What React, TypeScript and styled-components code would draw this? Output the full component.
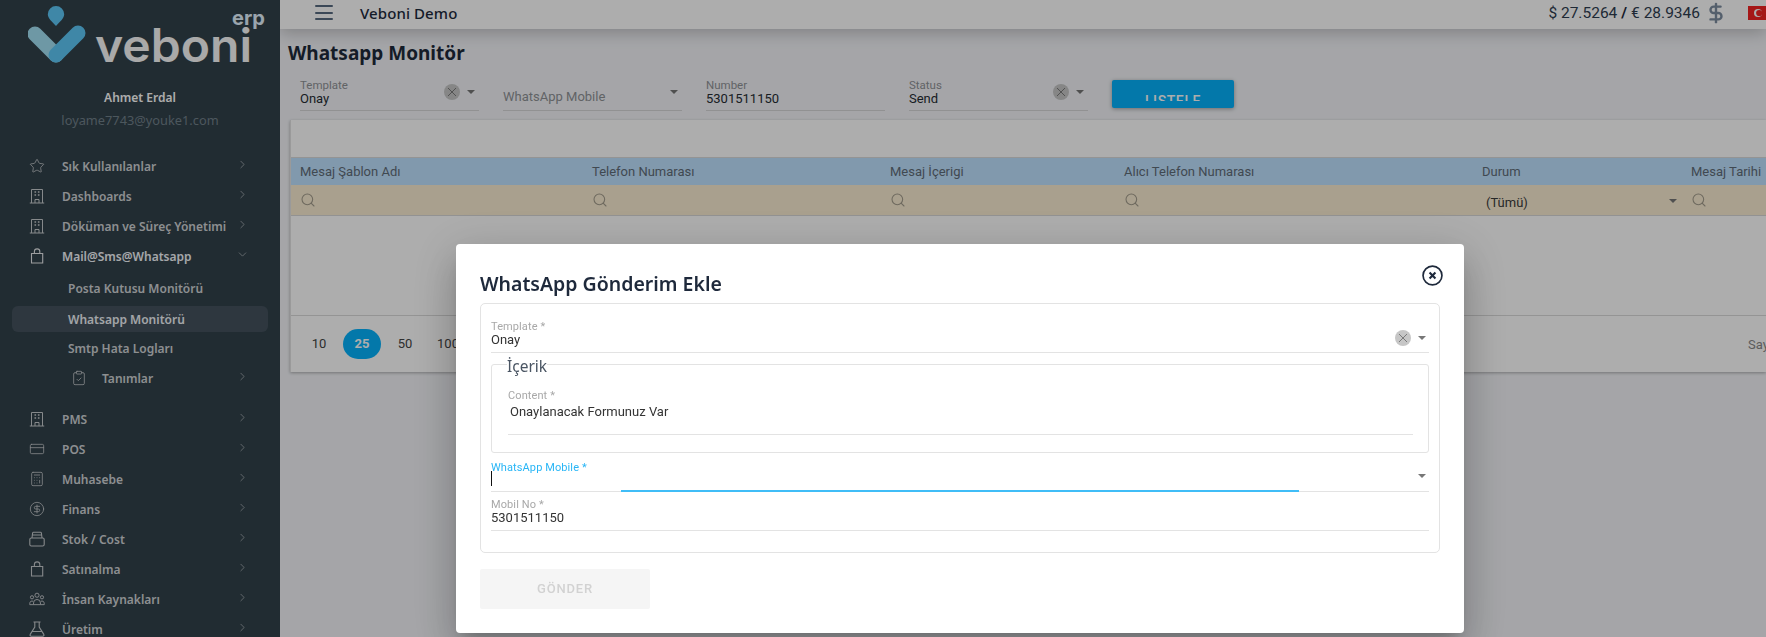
import React from "react";
import styled, { createGlobalStyle } from "styled-components";
import { Star, CreditCard, Calculator, CircleDollarSign, ChevronRight, ChevronDown, Search, DollarSign, ClipboardCheck } from "lucide-react";

const GlobalStyle = createGlobalStyle`
  html, body {
    margin: 0;
    height: 100%;
    overflow: hidden;
    background: #f3f4f8;
    font-family: "Roboto", "Liberation Sans", sans-serif;
  }
  * { box-sizing: border-box; }
`;

const Page = styled.div`
  display: flex;
  width: 100vw;
  height: 100vh;
  overflow: hidden;
`;

const Sidebar = styled.aside`
  flex: 0 0 280px;
  background: #32424b;
  font-family: "Noto Sans", sans-serif;
  overflow: hidden;
`;

const LogoWrap = styled.div`
  height: 86px;
  padding-left: 28px;
  display: flex;
`;

const LogoText = styled.svg`
  display: block;
`;

const UserBlock = styled.div`
  height: 65px;
  text-align: center;
  padding-top: 2px;
`;

const UserName = styled.div`
  font-size: 12px;
  line-height: 20px;
  font-weight: 600;
  color: #fff;
`;

const UserMail = styled.div`
  font-size: 12.800px;
  line-height: 20px;
  margin-top: 2px;
  color: #71808a;
`;

const MenuRow = styled.div<{ $open?: boolean }>`
  height: 30px;
  display: flex;
  align-items: center;
  padding-left: 29px;
  font-size: 12px;
  font-weight: 600;
  color: ${(p) => (p.$open ? "#f4f7fb" : "#d0d3d6")};
  svg.icon { flex: 0 0 16px; color: ${(p) => (p.$open ? "#e6e8ea" : "#c6cacd")}; }
`;

const MenuLabel = styled.span`
  width: 170px;
  margin-left: 17px;
  white-space: nowrap;
`;

const Chevron = styled.span`
  display: flex;
  color: #b4babf;
  margin-top: -3px;
  margin-left: 4px;
`;

const SubGroup = styled.div`
  padding-top: 2px;
  padding-bottom: 11px;
`;

const SubRow = styled.div<{ $active?: boolean }>`
  height: ${(p) => (p.$active ? "26px" : "30px")};
  margin: ${(p) => (p.$active ? "3px 12px 1px" : "0 12px")};
  padding-left: 56px;
  display: flex;
  align-items: center;
  border-radius: 6px;
  font-size: 12px;
  font-weight: 600;
  color: ${(p) => (p.$active ? "#f1f4f8" : "#d0d3d6")};
  background: ${(p) => (p.$active ? "#44525d" : "transparent")};
`;

const NestedRow = styled.div`
  height: 30px;
  padding-left: 71px;
  display: flex;
  align-items: center;
  font-size: 12px;
  font-weight: 600;
  color: #d0d3d6;
  svg.icon { color: #c6cacd; }
`;

const NestedLabel = styled.span`
  width: 130px;
  margin-left: 15px;
`;

const Main = styled.main`
  flex: 1;
  min-width: 0;
  display: flex;
  flex-direction: column;
  overflow: hidden;
`;

const TopBar = styled.header`
  flex: 0 0 29px;
  height: 29px;
  background: #fff;
  display: flex;
  align-items: center;
  padding: 0 0 4px 35px;
  box-shadow: 0 4px 16px rgba(0, 0, 0, 0.22);
  position: relative;
  color: #2b3a4d;
`;

const Burger = styled.div`
  width: 18px;
  height: 15px;
  display: flex;
  flex-direction: column;
  justify-content: space-between;
  margin-right: 27px;
  span { display: block; height: 2px; background: #586a80; border-radius: 1px; }
`;

const CompanyName = styled.div`
  font-family: "Noto Sans", sans-serif;
  font-size: 15px;
  letter-spacing: 0.1px;
  font-weight: 500;
  color: #1d2a3c;
`;

const Rates = styled.div`
  margin-left: auto;
  display: flex;
  align-items: center;
  font-size: 15.500px;
  color: #2f3d50;
  b { margin: 0 4px; font-weight: 700; color: #1d2a3c; }
`;

const RateIcon = styled.span`
  display: flex;
  margin-left: 5px;
  color: #7d8da0;
`;

const Flag = styled.span`
  width: 24px;
  height: 14px;
  margin-left: 21px;
  margin-right: -6px;
  background: #f42323;
  display: flex;
  align-items: center;
  padding-left: 5px;
`;

const PageTitle = styled.h1`
  margin: 11px 0 0 8px;
  font-family: "Noto Sans", sans-serif;
  font-size: 19px;
  line-height: 26px;
  font-weight: 700;
  color: #1e2a3a;
`;

const Filters = styled.div`
  display: flex;
  gap: 24px;
  padding-left: 20px;
  height: 41px;
  margin-top: 14px;
`;

const FilterField = styled.div`
  width: 179px;
  height: 31px;
  border-bottom: 1px solid #d6d6d8;
  position: relative;
`;

const FilterLabel = styled.div`
  font-size: 11.500px;
  line-height: 11px;
  color: #8f9296;
`;

const FilterValue = styled.div`
  font-size: 13px;
  line-height: 15px;
  color: #262c33;
`;

const Placeholder = styled.div`
  font-size: 13px;
  line-height: 34px;
  height: 30px;
  color: #8f9296;
`;

const FieldIcons = styled.div`
  position: absolute;
  right: 4px;
  top: 2px;
  height: 20px;
  display: flex;
  align-items: center;
  gap: 5px;
`;

const ClearDot = styled.span`
  width: 16px;
  height: 16px;
  border-radius: 50%;
  background: #c6c6c6;
  display: flex;
  align-items: center;
  justify-content: center;
`;

const Caret = styled.span`
  width: 0;
  height: 0;
  border-left: 4px solid transparent;
  border-right: 4px solid transparent;
  border-top: 4px solid #777;
  margin-left: 2px;
`;

const ListButton = styled.div`
  width: 122px;
  height: 28px;
  border-radius: 2px;
  background: #05b2fb;
  box-shadow: 0 1px 4px rgba(0, 0, 0, 0.35);
  padding-top: 14px;
  text-align: center;
  overflow: hidden;
`;

const ListButtonText = styled.span`
  display: block;
  height: 7px;
  overflow: hidden;
  font-size: 14px;
  line-height: 14px;
  font-weight: 500;
  letter-spacing: 0.6px;
  color: #fff;
`;

const Card = styled.section`
  margin-left: 10px;
  margin-top: -1px;
  height: 252px;
  background: #fff;
  overflow: hidden;
  box-shadow: 0 1px 3px rgba(0, 0, 0, 0.3);
  border-left: 1px solid #e4e4e4;
`;

const CardToolbar = styled.div`
  height: 38px;
  border-bottom: 1px solid #dadada;
`;

const TableRow = styled.div<{ $kind: "head" | "filter" }>`
  display: grid;
  grid-template-columns: 292px 298px 234px 358px 209px 1fr;
  height: ${(p) => (p.$kind === "head" ? "27px" : "31px")};
  align-items: center;
  background: ${(p) => (p.$kind === "head" ? "#bfe2ff" : "#f9ecd2")};
  border-bottom: ${(p) => (p.$kind === "filter" ? "1px solid #d8d8d8" : "none")};
  color: #5f6c78;
  font-size: 13px;
`;

const Cell = styled.div`
  padding-left: 9px;
  position: relative;
  display: flex;
  align-items: center;
  white-space: nowrap;
`;

const SearchIcon = styled(Search)`
  color: #a39c8c;
`;

const DurumValue = styled.span`
  color: #3a3a3a;
  margin-left: 4px;
  margin-top: 5px;
`;

const DurumCaret = styled(Caret)`
  position: absolute;
  right: 5px;
  top: 9px;
`;

const CardBody = styled.div`
  height: 100px;
  border-bottom: 1px solid #dadada;
`;

const CardFooter = styled.div`
  height: 56px;
  display: grid;
  grid-template-columns: 1457px auto;
  align-items: center;
  font-size: 13px;
  color: #555;
`;

const Pager = styled.div`
  display: flex;
  align-items: center;
  padding-left: 9px;
  gap: 5px;
`;

const PageItem = styled.div<{ $active?: boolean }>`
  width: 38px;
  height: 30px;
  line-height: 30px;
  text-align: center;
  border-radius: 15px;
  font-weight: ${(p) => (p.$active ? 700 : 400)};
  color: ${(p) => (p.$active ? "#fff" : "#444")};
  background: ${(p) => (p.$active ? "#05b2fb" : "transparent")};
`;

const PageInfo = styled.div`
  color: #888;
  white-space: nowrap;
`;

const Backdrop = styled.div`
  position: fixed;
  inset: 0;
  background: rgba(0, 0, 0, 0.32);
`;

const Dialog = styled.div`
  position: fixed;
  left: 456px;
  top: 244px;
  width: 1008px;
  padding: 22px 24px 24px;
  background: #fff;
  border-radius: 4px;
  box-shadow: 0 11px 15px -7px rgba(0, 0, 0, 0.2), 0 24px 38px 3px rgba(0, 0, 0, 0.14), 0 9px 46px 8px rgba(0, 0, 0, 0.12);
`;

const DialogTitle = styled.h2`
  margin: 0 0 1px;
  font-family: "Noto Sans", sans-serif;
  font-size: 19.500px;
  line-height: 36px;
  font-weight: 600;
  color: #1e293b;
`;

const CloseButton = styled.div`
  position: absolute;
  top: 21px;
  right: 21px;
  display: flex;
  color: #1e293b;
`;

const FormBox = styled.div`
  border: 1px solid #e3e3e3;
  border-radius: 5px;
  padding: 17px 10px 21px;
`;

const Field = styled.div<{ $tight?: boolean }>`
  position: relative;
  height: ${(p) => (p.$tight ? "30px" : "32px")};
  border-bottom: 1px solid #e3e3e3;
  margin-top: ${(p) => (p.$tight ? "9px" : "0")};
  & + & { margin-top: 7px; }
`;

const FieldLabel = styled.div<{ $focus?: boolean }>`
  font-size: 11px;
  line-height: 12px;
  letter-spacing: 0.1px;
  color: ${(p) => (p.$focus ? "#29b6f6" : "#a8a8a8")};
`;

const FieldValue = styled.div`
  font-size: 13px;
  line-height: 14px;
  color: #333;
`;

const CursorBar = styled.div`
  width: 1px;
  height: 15px;
  margin-top: -3px;
  background: #111;
`;

const FocusLine = styled.div`
  position: absolute;
  left: 130px;
  width: 678px;
  bottom: -1px;
  height: 2px;
  background: #40bdf7;
`;

const ModalIcons = styled(FieldIcons)`
  right: 3px;
  top: 7px;
`;

const TightIcons = styled(ModalIcons)`
  top: 4px;
`;

const ContentSet = styled.fieldset`
  margin: -2px 0 0;
  border: 1px solid #e3e3e3;
  border-radius: 3px;
  padding: 13px 15px 0 16px;
  height: 102px;
  min-width: 0;
`;

const ContentLegend = styled.legend`
  margin-left: -1px;
  padding: 4px 0 0;
  font-family: "Noto Sans", sans-serif;
  font-size: 15.500px;
  line-height: 22px;
  color: #4a5563;
`;

const ContentField = styled.div`
  height: 45px;
  border-bottom: 1px solid #e3e3e3;
`;

const ContentValue = styled(FieldValue)`
  padding-left: 2px;
  margin-top: 1px;
  line-height: 18px;
`;

const SendButton = styled.div`
  width: 170px;
  height: 40px;
  margin-top: 16px;
  background: #f5f5f5;
  border-radius: 2px;
  text-align: center;
  line-height: 40px;
  font-size: 13px;
  font-weight: 500;
  letter-spacing: 0.8px;
  color: #d2d2d2;
`;

const ico = { className: "icon", size: 16, strokeWidth: 1.2 };

const BuildingIcon = () => (
  <svg className="icon" width="16" height="16" viewBox="0 0 16 16" fill="none" stroke="currentColor" strokeWidth="1">
    <path d="M2.5 15V1.5h11V15M0.8 15h14.4M6 15v-3.5h4V15" />
    <path d="M5.5 4h1.6M8.9 4h1.6M5.5 7h1.6M8.9 7h1.6" strokeWidth="1.3" />
  </svg>
);

const BagIcon = () => (
  <svg className="icon" width="16" height="16" viewBox="0 0 16 16" fill="none" stroke="currentColor" strokeWidth="1.1">
    <path d="M2.5 5.5h11.2v9.5H2.5zM5.4 5.5V3.600a2.700 2.700 0 0 1 5.400 0v1.900" />
  </svg>
);

const StockIcon = () => (
  <svg className="icon" width="16" height="16" viewBox="0 0 16 16" fill="none" stroke="currentColor" strokeWidth="1.1">
    <rect x="0.8" y="7" width="14.4" height="8" rx="1.6" />
    <path d="M3 7l.6-5a1 1 0 0 1 1-.8h6.800a1 1 0 0 1 1 .8L13 7M3.400 4h9.200" />
  </svg>
);

const GroupIcon = () => (
  <svg className="icon" width="17" height="16" viewBox="0 0 17 16" fill="none" stroke="currentColor" strokeWidth="1">
    <circle cx="8.5" cy="4" r="2.2" />
    <circle cx="3.2" cy="6.2" r="1.7" />
    <circle cx="13.8" cy="6.2" r="1.7" />
    <path d="M4.800 14v-1.800a3.700 3.700 0 0 1 7.400 0V14zM4.800 14H.8v-1.400a2.400 2.400 0 0 1 3.600-2.100M12.200 14h4v-1.400a2.400 2.400 0 0 0-3.600-2.100" />
  </svg>
);

const FlaskIcon = () => (
  <svg className="icon" width="16" height="16" viewBox="0 0 16 16" fill="none" stroke="currentColor" strokeWidth="1.1">
    <path d="M4.500 1h7M5.800 1v5L1.200 13.400c-.5.900.1 1.800 1.100 1.800h11.400c1 0 1.600-.9 1.100-1.800L10.200 6V1M3.600 10.500h8.800" />
  </svg>
);

const Clear = () => (
  <ClearDot>
    <svg width="10" height="10" viewBox="0 0 10 10" stroke="#707070" strokeWidth="0.9">
      <path d="M1 1l8 8M9 1l-8 8" />
    </svg>
  </ClearDot>
);

const menuTop = [
  { label: "Sık Kullanılanlar", icon: <Star {...ico} /> },
  { label: "Dashboards", icon: <BuildingIcon /> },
  { label: "Döküman ve Süreç Yönetimi", icon: <BuildingIcon /> },
];

const menuBottom = [
  { label: "PMS", icon: <BuildingIcon /> },
  { label: "POS", icon: <CreditCard {...ico} /> },
  { label: "Muhasebe", icon: <Calculator {...ico} /> },
  { label: "Finans", icon: <CircleDollarSign {...ico} /> },
  { label: "Stok / Cost", icon: <StockIcon /> },
  { label: "Satınalma", icon: <BagIcon /> },
  { label: "İnsan Kaynakları", icon: <GroupIcon /> },
  { label: "Üretim", icon: <FlaskIcon /> },
];

const columns = ["Mesaj Şablon Adı", "Telefon Numarası", "Mesaj İçerigi", "Alıcı Telefon Numarası", "Durum", "Mesaj Tarihi"];

const Logo = () => (
  <LogoText width="252" height="80" viewBox="0 0 252 80">
    <path d="M28 6a8.200 8.200 0 0 1 8.200 8.200c0 4-4.600 7.800-8.200 11.800-3.600-4-8.200-7.800-8.200-11.800A8.200 8.200 0 0 1 28 6z" fill="#5dc8f7" />
    <path d="M7 34l21 21" stroke="#a3e0f3" strokeWidth="15" strokeLinecap="round" />
    <path d="M50 33L28 55" stroke="#5dc8f7" strokeWidth="15" strokeLinecap="round" />
    <text x="67" y="62" fontFamily="Inter, sans-serif" fontSize="46" fontWeight="600" fill="#f9f9f9" textLength="157" lengthAdjust="spacingAndGlyphs">veboni</text>
    <text x="204" y="25" fontFamily="Inter, sans-serif" fontSize="20" fontWeight="700" fill="#e3f3ff">erp</text>
  </LogoText>
);

const App = () => {
  return (
    <Page>
      <GlobalStyle />
      <Sidebar>
        <LogoWrap>
          <Logo />
        </LogoWrap>
        <UserBlock>
          <UserName>Ahmet Erdal</UserName>
          <UserMail>loyame7743@youke1.com</UserMail>
        </UserBlock>
        {menuTop.map((item) => (
          <MenuRow key={item.label}>
            {item.icon}
            <MenuLabel>{item.label}</MenuLabel>
            <Chevron><ChevronRight size={13} strokeWidth={1.3} /></Chevron>
          </MenuRow>
        ))}
        <MenuRow $open>
          <BagIcon />
          <MenuLabel>Mail@Sms@Whatsapp</MenuLabel>
          <Chevron><ChevronDown size={13} strokeWidth={1.3} /></Chevron>
        </MenuRow>
        <SubGroup>
          <SubRow>Posta Kutusu Monitörü</SubRow>
          <SubRow $active>Whatsapp Monitörü</SubRow>
          <SubRow>Smtp Hata Logları</SubRow>
          <NestedRow>
            <ClipboardCheck className="icon" size={16} strokeWidth={1.2} />
            <NestedLabel>Tanımlar</NestedLabel>
            <Chevron><ChevronRight size={13} strokeWidth={1.3} /></Chevron>
          </NestedRow>
        </SubGroup>
        {menuBottom.map((item) => (
          <MenuRow key={item.label}>
            {item.icon}
            <MenuLabel>{item.label}</MenuLabel>
            <Chevron><ChevronRight size={13} strokeWidth={1.3} /></Chevron>
          </MenuRow>
        ))}
      </Sidebar>

      <Main>
        <TopBar>
          <Burger><span /><span /><span /></Burger>
          <CompanyName>Veboni Demo</CompanyName>
          <Rates>
            $ 27.5264 <b>/</b> € 28.9346
            <RateIcon><DollarSign size={22} strokeWidth={2.6} /></RateIcon>
            <Flag>
              <svg width="10" height="10" viewBox="0 0 10 10">
                <circle cx="5" cy="5" r="4" fill="#fff" />
                <circle cx="6.2" cy="5" r="3.100" fill="#f42323" />
              </svg>
            </Flag>
          </Rates>
        </TopBar>
        <PageTitle>Whatsapp Monitör</PageTitle>
        <Filters>
          <FilterField>
            <FilterLabel>Template</FilterLabel>
            <FilterValue>Onay</FilterValue>
            <FieldIcons><Clear /><Caret /></FieldIcons>
          </FilterField>
          <FilterField>
            <Placeholder>WhatsApp Mobile</Placeholder>
            <FieldIcons><Caret /></FieldIcons>
          </FilterField>
          <FilterField>
            <FilterLabel>Number</FilterLabel>
            <FilterValue>5301511150</FilterValue>
          </FilterField>
          <FilterField>
            <FilterLabel>Status</FilterLabel>
            <FilterValue>Send</FilterValue>
            <FieldIcons><Clear /><Caret /></FieldIcons>
          </FilterField>
          <ListButton><ListButtonText>LISTELE</ListButtonText></ListButton>
        </Filters>
        <Card>
          <CardToolbar />
          <TableRow $kind="head">
            {columns.map((c) => <Cell key={c}>{c}</Cell>)}
          </TableRow>
          <TableRow $kind="filter">
            {columns.map((c) =>
              c === "Durum" ? (
                <Cell key={c}><DurumValue>(Tümü)</DurumValue><DurumCaret /></Cell>
              ) : (
                <Cell key={c}><SearchIcon size={16} strokeWidth={1.6} /></Cell>
              )
            )}
          </TableRow>
          <CardBody />
          <CardFooter>
            <Pager>
              <PageItem>10</PageItem>
              <PageItem $active>25</PageItem>
              <PageItem>50</PageItem>
              <PageItem>100</PageItem>
            </Pager>
            <PageInfo>Sayfa 1</PageInfo>
          </CardFooter>
        </Card>
      </Main>

      <Backdrop />
      <Dialog>
        <DialogTitle>WhatsApp Gönderim Ekle</DialogTitle>
        <CloseButton>
          <svg width="21" height="21" viewBox="0 0 20 20" fill="none" stroke="currentColor">
            <circle cx="10" cy="10" r="9" strokeWidth="1.6" />
            <path d="M7.200 7.200l5.600 5.600M12.800 7.200l-5.600 5.600" strokeWidth="2" />
          </svg>
        </CloseButton>
        <FormBox>
          <Field>
            <FieldLabel>Template *</FieldLabel>
            <FieldValue>Onay</FieldValue>
            <ModalIcons><Clear /><Caret /></ModalIcons>
          </Field>
          <ContentSet>
            <ContentLegend>İçerik</ContentLegend>
            <ContentField>
              <FieldLabel>Content *</FieldLabel>
              <ContentValue>Onaylanacak Formunuz Var</ContentValue>
            </ContentField>
          </ContentSet>
          <Field $tight>
            <FieldLabel $focus>WhatsApp Mobile *</FieldLabel>
            <CursorBar />
            <TightIcons><Caret /></TightIcons>
            <FocusLine />
          </Field>
          <Field>
            <FieldLabel>Mobil No *</FieldLabel>
            <FieldValue>5301511150</FieldValue>
          </Field>
        </FormBox>
        <SendButton>GÖNDER</SendButton>
      </Dialog>
    </Page>
  );
};

export default App;
